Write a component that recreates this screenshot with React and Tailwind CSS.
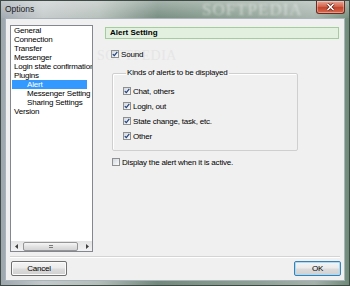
import React from "react";

const treeItems = [
  { label: "General", level: 0 },
  { label: "Connection", level: 0 },
  { label: "Transfer", level: 0 },
  { label: "Messenger", level: 0 },
  { label: "Login state confirmation", level: 0 },
  { label: "Plugins", level: 0 },
  { label: "Alert", level: 1, selected: true },
  { label: "Messenger Setting", level: 1 },
  { label: "Sharing Settings", level: 1 },
  { label: "Version", level: 0 },
];

const alertKinds = ["Chat, others", "Login, out", "State change, task, etc.", "Other"];

const CheckBox = ({ checked }) => (
  <span className="flex h-[8px] w-[8px] shrink-0 items-center justify-center border border-[#8e8f8f] bg-[linear-gradient(135deg,#d3d9e0,#f9fafb)]">
    {checked && (
      <svg width="6" height="6" viewBox="0 0 6 6">
        <path d="M0.8 3.1 L2.3 4.7 L5.3 0.9" fill="none" stroke="#1f3f7a" strokeWidth="1.2" />
      </svg>
    )}
  </span>
);

const CheckRow = ({ label, checked }) => (
  <label className="relative flex h-[8px] items-center gap-[2px]">
    <CheckBox checked={checked} />
    <span className="leading-[9px] whitespace-nowrap">{label}</span>
  </label>
);

const Button = ({ children, primary, className }) => (
  <button
    className={
      "flex h-[15px] items-center justify-center rounded-[2px] border bg-[linear-gradient(180deg,#f4f4f4_0%,#ebebeb_48%,#dcdcdc_52%,#d0d0d0_100%)] leading-[9px] " +
      (primary
        ? "border-[#3c7fb1] shadow-[inset_0_0_0_1px_#a8dcf6] "
        : "border-[#707070] shadow-[inset_0_0_0_1px_#fbfbfb] ") +
      className
    }
  >
    {children}
  </button>
);

const ScrollBar = () => (
  <div className="flex h-[10px] shrink-0 items-center bg-[linear-gradient(180deg,#e4e4e4,#f2f2f2)]">
    <div className="flex h-full w-[10px] items-center justify-center">
      <svg width="3" height="5" viewBox="0 0 3 5">
        <path d="M3 0 L0 2.5 L3 5 Z" fill="#404040" />
      </svg>
    </div>
    <div className="ml-[2px] flex h-[9px] w-[55px] items-center justify-center rounded-[2px] border border-[#959595] bg-[linear-gradient(180deg,#f6f6f6,#e2e2e2_50%,#d4d4d4)]">
      <div className="flex h-[3px] w-[4px] flex-col justify-between">
        <span className="h-px bg-[#7a7a7a]" />
        <span className="h-px bg-[#7a7a7a]" />
      </div>
    </div>
    <div className="ml-auto flex h-full w-[10px] items-center justify-center">
      <svg width="3" height="5" viewBox="0 0 3 5">
        <path d="M0 0 L3 2.5 L0 5 Z" fill="#404040" />
      </svg>
    </div>
  </div>
);

export default function App() {
  return (
    <div
      className="relative flex h-[286px] w-[350px] flex-col overflow-hidden border border-[#3f4a46] bg-[linear-gradient(90deg,#9ea6ae_0%,#c3c9ca_12%,#b4beb9_28%,#72897d_45%,#809688_58%,#90a297_75%,#a5b2ab_90%,#6f8b78_100%)] text-[8px] tracking-[-0.2px] text-black"
      style={{ fontFamily: '"Liberation Sans", Arial, sans-serif' }}
    >
      {/* glass watermark in the caption */}
      <span className="pointer-events-none absolute left-[201px] top-0 text-[17px] leading-[18px] tracking-[1px] text-white/45 blur-[1px]" style={{ fontFamily: '"Liberation Serif", serif' }}>
        SOFTPEDIA
      </span>

      <div className="relative flex h-[17px] shrink-0 items-start justify-between bg-[linear-gradient(180deg,rgba(255,255,255,0.35),rgba(255,255,255,0.05))] pl-[4px] pr-[4px]">
        <span className="mt-[3px] text-[8.5px] leading-[10px] tracking-normal text-[#1b1b1b]">Options</span>
        <button className="flex h-[13px] w-[29px] items-center justify-center rounded-b-[3px] border border-t-0 border-[#6b2a22] bg-[linear-gradient(180deg,#eba596_0%,#d2664e_45%,#c2442c_55%,#d86b4e_100%)] shadow-[inset_0_0_0_1px_rgba(255,255,255,0.35)]">
          <svg width="9" height="8" viewBox="0 0 9 8">
            <path d="M1.5 1 L7.5 7 M7.5 1 L1.5 7" stroke="#5a1e16" strokeWidth="3" />
            <path d="M1.5 1 L7.5 7 M7.5 1 L1.5 7" stroke="#ffffff" strokeWidth="1.6" />
          </svg>
        </button>
      </div>

      <div className="relative mx-[4px] mb-[4px] flex flex-1 flex-col border border-[#aab4bb] bg-[#f0f0f0]">
        <span className="pointer-events-none absolute left-[91px] top-[26px] text-[14px] tracking-[0.5px] text-[#e6e6e6]" style={{ fontFamily: '"Liberation Serif", serif' }}>
          SOFTPEDIA
        </span>

        <div className="relative flex pl-[4px] pr-[5px] pt-[6px]">
          <div className="flex h-[227px] w-[83px] flex-col border border-[#828790] bg-white">
            <div className="flex-1 overflow-hidden">
              {treeItems.map((item) => (
                <div
                  key={item.label}
                  className={
                    "ml-[1px] h-[9px] w-[75px] whitespace-nowrap leading-[9px] " +
                    (item.level ? "pl-[15px] " : "pl-[2px] ") +
                    (item.selected ? "bg-[#3399ff] text-white" : "")
                  }
                >
                  {item.label}
                </div>
              ))}
            </div>
            <ScrollBar />
          </div>

          <div className="ml-[12px] flex w-[234px] flex-col">
            <div className="mt-[2px] flex h-[12px] items-center border border-[#a3cd9b] bg-[#e2f0df] pl-[4px] font-bold tracking-normal">
              Alert Setting
            </div>

            <div className="ml-[6px] mt-[11px]">
              <CheckRow label="Sound" checked />
            </div>

            <fieldset className="ml-[7px] mt-[10px] w-[186px] rounded-[2px] border border-[#cfcfcf] pb-[10px] pl-[10px] shadow-[inset_1px_1px_0_#ffffff]">
              <legend className="ml-[3px] px-[1px] leading-[10px]">Kinds of alerts to be displayed</legend>
              <div className="mt-[9px] flex flex-col gap-[7px]">
                {alertKinds.map((kind) => (
                  <CheckRow key={kind} label={kind} checked />
                ))}
              </div>
            </fieldset>

            <div className="ml-[7px] mt-[7px]">
              <CheckRow label="Display the alert when it is active." />
            </div>
          </div>
        </div>

        <div className="mx-[4px] mt-[4px] h-[2px] border-t border-[#d4d4d4] border-b border-b-white" />

        <div className="flex justify-between pl-[5px] pr-[3px] pt-[3px]">
          <Button className="w-[56px]">Cancel</Button>
          <Button primary className="w-[47px]">OK</Button>
        </div>
      </div>
    </div>
  );
}
